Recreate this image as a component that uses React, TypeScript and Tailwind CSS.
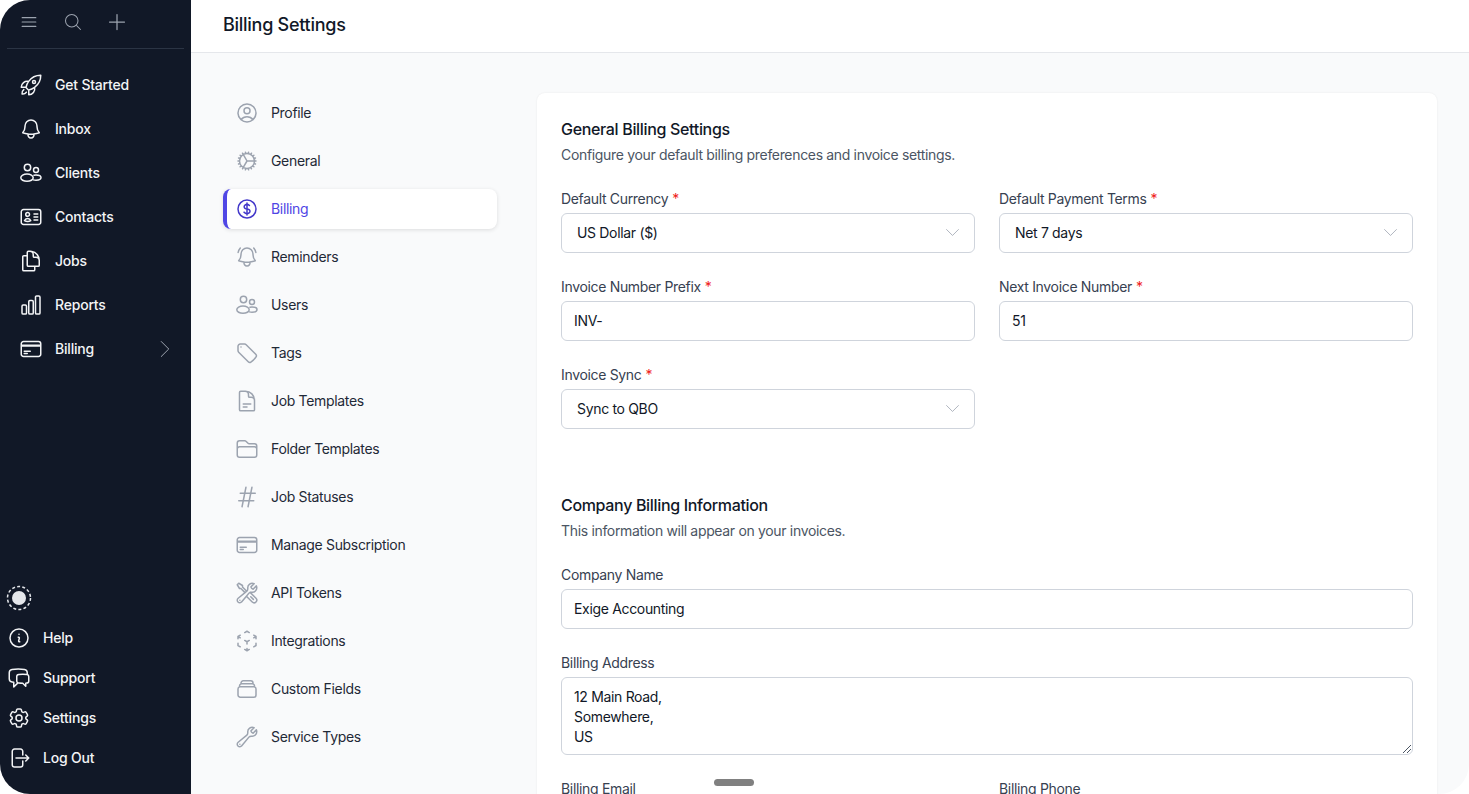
import React from "react";
import {
  HiOutlineBars3, HiOutlineMagnifyingGlass, HiOutlinePlus, HiOutlineRocketLaunch, HiOutlineBell, HiOutlineIdentification,
  HiOutlineDocumentDuplicate, HiOutlineChartBar, HiOutlineCreditCard, HiOutlineChevronRight, HiOutlineChevronDown,
  HiOutlineInformationCircle, HiOutlineChatBubbleLeftRight, HiOutlineCog6Tooth, HiOutlineArrowRightOnRectangle,
  HiOutlineUserCircle, HiOutlineCog, HiOutlineCurrencyDollar, HiOutlineBellAlert, HiOutlineTag, HiOutlineDocumentText,
  HiOutlineFolder, HiOutlineHashtag, HiOutlineWrenchScrewdriver, HiOutlineCubeTransparent, HiOutlineRectangleStack, HiOutlineWrench,
} from "react-icons/hi2";

const I = 24;

const UsersI = () => (
  <svg width="24" height="24" viewBox="0 0 24 24" fill="none" stroke="currentColor" strokeWidth={1.5} strokeLinecap="round" strokeLinejoin="round">
    <circle cx="8.500" cy="6.500" r="3.200" />
    <circle cx="17" cy="9" r="2.500" />
    <ellipse cx="8" cy="16.700" rx="6.200" ry="3.600" />
    <path d="M15 14.200c.6-.2 1.300-.3 2-.3 2.800 0 5 1.200 5 2.700 0 1.500-2.200 2.700-5 2.700-1 0-2-.2-2.700-.4" />
  </svg>
);
const SpinnerI = () => (
  <svg width="26" height="26" viewBox="0 0 26 26" fill="none">
    <circle cx="13" cy="13" r="11.500" stroke="currentColor" strokeWidth="1.500" strokeDasharray="3 2.200" />
    <circle cx="13" cy="13" r="7" fill="currentColor" />
  </svg>
);

const mainNav: [string, React.ReactNode, boolean?][] = [
  ["Get Started", <HiOutlineRocketLaunch size={I} />],
  ["Inbox", <HiOutlineBell size={I} />],
  ["Clients", <UsersI />],
  ["Contacts", <HiOutlineIdentification size={I} />],
  ["Jobs", <HiOutlineDocumentDuplicate size={I} />],
  ["Reports", <HiOutlineChartBar size={I} />],
  ["Billing", <HiOutlineCreditCard size={I} />, true],
];
const footNav: [string, React.ReactNode][] = [
  ["Help", <HiOutlineInformationCircle size={I} />],
  ["Support", <HiOutlineChatBubbleLeftRight size={I} />],
  ["Settings", <HiOutlineCog6Tooth size={I} />],
  ["Log Out", <HiOutlineArrowRightOnRectangle size={I} />],
];
const subNav: [string, React.ReactNode][] = [
  ["Profile", <HiOutlineUserCircle size={I} />],
  ["General", <HiOutlineCog size={I} />],
  ["Billing", <HiOutlineCurrencyDollar size={I} />],
  ["Reminders", <HiOutlineBellAlert size={I} />],
  ["Users", <UsersI />],
  ["Tags", <HiOutlineTag size={I} />],
  ["Job Templates", <HiOutlineDocumentText size={I} />],
  ["Folder Templates", <HiOutlineFolder size={I} />],
  ["Job Statuses", <HiOutlineHashtag size={I} />],
  ["Manage Subscription", <HiOutlineCreditCard size={I} />],
  ["API Tokens", <HiOutlineWrenchScrewdriver size={I} />],
  ["Integrations", <HiOutlineCubeTransparent size={I} />],
  ["Custom Fields", <HiOutlineRectangleStack size={I} />],
  ["Service Types", <HiOutlineWrench size={I} />],
];

const Label = ({ text, req }: { text: string; req?: boolean }) => (
  <div className="text-[14px] leading-5 text-[#374151] mb-1 h-5">{text}{req && <span className="text-[#ef1c1c] ml-1">*</span>}</div>
);
const Select = ({ label, value }: { label: string; value: string }) => (
  <div>
    <Label text={label} req />
    <div className="h-10 rounded-md border border-[#cfd4dc] bg-white pl-[15px] pr-3 pb-[2px] flex items-center justify-between text-[14px] text-[#111827]">
      <span>{value}</span>
      <HiOutlineChevronDown size={19} strokeWidth={1} className="text-[#9ca3af]" />
    </div>
  </div>
);
const Input = ({ label, value, req }: { label: string; value: string; req?: boolean }) => (
  <div>
    <Label text={label} req={req} />
    <div className="h-10 rounded-md border border-[#cfd4dc] bg-white px-3 pb-[2px] flex items-center text-[14px] text-[#111827]">{value}</div>
  </div>
);

export default function App() {
  return (
    <div className="h-[794px] w-[1469px] overflow-hidden bg-white" style={{ fontFamily: "Inter, 'Noto Sans', sans-serif" }}>
      <div className="relative h-full w-full flex overflow-hidden rounded-[30px] bg-white">
        <aside className="w-[191px] shrink-0 bg-[#111827] flex flex-col text-white tracking-[-0.2px]">
          <div className="h-[49px] mx-[7px] border-b border-[#2b3444] flex items-center pl-[12px] pb-[5px] text-[#9ca3af]">
            <HiOutlineBars3 size={20} strokeWidth={1.25} />
            <HiOutlineMagnifyingGlass size={20} strokeWidth={1.25} className="ml-[24px]" />
            <HiOutlinePlus size={24} strokeWidth={1.25} className="ml-[22px]" />
          </div>
          <nav className="mt-[14px] flex flex-col">
            {mainNav.map(([t, ic, chev]) => (
              <div key={t} className="h-11 pl-[19px] pr-[14px] flex items-center gap-[12px] text-[14px] font-medium text-[#f3f4f6]">
                <span className="w-6 h-6 shrink-0">{ic}</span>
                <span className="flex-1 pb-px">{t}</span>
                {chev && <HiOutlineChevronRight size={24} strokeWidth={1} className="text-[#9ca3af]" />}
              </div>
            ))}
          </nav>
          <div className="mt-auto pb-[16px] flex flex-col">
            <div className="h-10 pl-[6px] flex items-center text-[#e5e7eb]"><SpinnerI /></div>
            {footNav.map(([t, ic]) => (
              <div key={t} className="h-10 pl-[7px] flex items-center text-[14px] font-medium text-[#f3f4f6]">
                <span className="w-6 h-6 mr-[12px] flex items-center justify-center">{ic}</span>
                <span className="pb-px">{t}</span>
              </div>
            ))}
          </div>
        </aside>
        <main className="flex-1 flex flex-col min-w-0">
          <header className="h-[53px] shrink-0 border-b border-[#e5e7eb] flex items-center pl-8 pb-1 bg-white">
            <h1 className="text-[18px] font-medium tracking-[-0.27px] text-[#111827]">Billing Settings</h1>
          </header>
          <div className="flex-1 bg-[#f9fafb] flex items-start pl-8 pr-8 pt-10 gap-10 overflow-hidden tracking-[-0.33px]">
            <nav className="w-[274px] shrink-0 flex flex-col gap-2">
              {subNav.map(([t, ic]) => {
                const active = t === "Billing";
                return (
                  <div key={t} className={active
                    ? "h-10 flex items-center gap-3 pl-[8px] text-[14px] rounded-lg bg-white shadow-[0_1px_4px_rgba(0,0,0,0.12)] border-l-4 border-[#4f46e5] text-[#4f46e5]"
                    : "h-10 flex items-center gap-3 pl-3 text-[14px] rounded-lg text-[#1f2937]"}>
                    <span className={active ? "text-[#4338ca]" : "text-[#9ca3af]"}>{ic}</span>
                    <span className="pb-px">{t}</span>
                  </div>
                );
              })}
            </nav>
            <section className="w-[900px] shrink-0 bg-white rounded-lg shadow-[0_0_2px_rgba(0,0,0,0.08)] p-6">
              <h2 className="text-[16px] leading-6 font-medium text-[#111827]">General Billing Settings</h2>
              <p className="text-[14px] leading-5 text-[#4b5563] mt-1">Configure your default billing preferences and invoice settings.</p>
              <div className="grid grid-cols-2 gap-x-6 gap-y-6 mt-6">
                <Select label="Default Currency" value="US Dollar ($)" />
                <Select label="Default Payment Terms" value="Net 7 days" />
                <Input label="Invoice Number Prefix" value="INV-" req />
                <Input label="Next Invoice Number" value="51" req />
                <Select label="Invoice Sync" value="Sync to QBO" />
              </div>
              <h2 className="text-[16px] leading-6 font-medium text-[#111827] mt-16">Company Billing Information</h2>
              <p className="text-[14px] leading-5 text-[#4b5563] mt-1">This information will appear on your invoices.</p>
              <div className="mt-6"><Input label="Company Name" value="Exige Accounting" /></div>
              <div className="mt-6">
                <Label text="Billing Address" />
                <div className="relative h-[78px] rounded-md border border-[#cfd4dc] px-3 pt-[9px] text-[14px] leading-5 text-[#111827]">
                  <div>12 Main Road,</div><div>Somewhere,</div><div>US</div>
                  <svg className="absolute right-[1px] bottom-[1px]" width="9" height="9" viewBox="0 0 9 9" stroke="#4b5563" strokeWidth="1"><path d="M1 9 9 1M5 9 9 5" /></svg>
                </div>
              </div>
              <div className="grid grid-cols-2 gap-x-6 mt-6">
                <Label text="Billing Email" />
                <Label text="Billing Phone" />
              </div>
            </section>
          </div>
        </main>
        <div className="absolute left-[714px] bottom-[8px] w-10 h-[7px] rounded-full bg-[#808080]" />
      </div>
    </div>
  );
}
